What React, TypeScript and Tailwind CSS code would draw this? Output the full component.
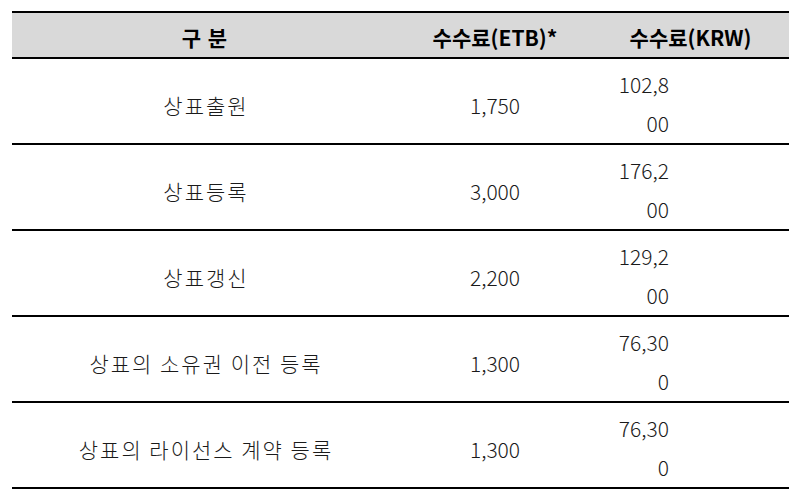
import React from "react";

const rows = [
  { name: "상표출원", etb: "1,750", krw: ["102,8", "00"] },
  { name: "상표등록", etb: "3,000", krw: ["176,2", "00"] },
  { name: "상표갱신", etb: "2,200", krw: ["129,2", "00"] },
  { name: "상표의 소유권 이전 등록", etb: "1,300", krw: ["76,30", "0"] },
  { name: "상표의 라이선스 계약 등록", etb: "1,300", krw: ["76,30", "0"] },
];

export default function App() {
  return (
    <div
      className="w-[802px] h-[499px] bg-white pt-[11px] pl-[12px]"
      style={{ fontFamily: '"Noto Sans CJK KR", "Noto Sans", sans-serif' }}
    >
      <div className="w-[777px] border-t-2 border-black text-[21px] text-[#1a1a1a]">
        <div className="flex h-[46px] bg-[#d9d9d9] border-b-2 border-black font-bold text-black">
          <div className="w-[386px] flex items-center justify-center pt-[6px] tracking-[1px]">구 분</div>
          <div className="w-[194px] flex items-center justify-center pt-[6px]">수수료(ETB)*</div>
          <div className="w-[197px] flex items-center justify-center pt-[6px]">수수료(KRW)</div>
        </div>
        {rows.map((r, i) => (
          <div key={i} className="flex h-[86px] border-b-2 border-black font-light">
            <div className="w-[386px] flex items-center justify-center pt-[10px] pl-[2px] tracking-[2px]">
              {r.name}
            </div>
            <div className="w-[194px] flex items-center justify-center pt-[10px]">{r.etb}</div>
            <div className="w-[197px] flex flex-col justify-center items-end pr-[120px] pt-[6px] leading-[39px]">
              <span>{r.krw[0]}</span>
              <span>{r.krw[1]}</span>
            </div>
          </div>
        ))}
      </div>
    </div>
  );
}
